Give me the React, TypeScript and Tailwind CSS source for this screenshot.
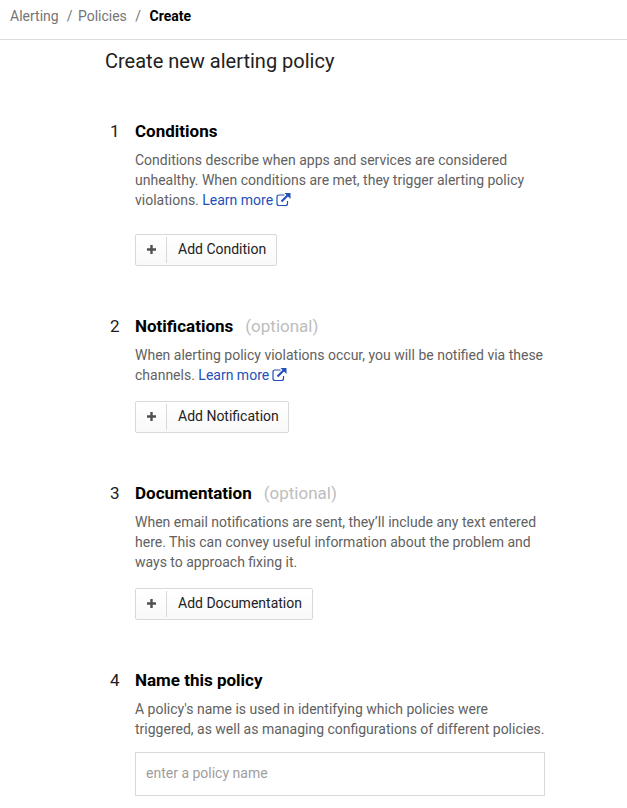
import React from "react";

function LinkIcon() {
  return (
    <svg className="ml-[3px] inline-block h-[14px] w-[15px] align-[-2px]" viewBox="0 0 15 14" fill="none" stroke="currentColor">
      <path d="M8.5 2H3Q1 2 1 4V10.5Q1 12.5 3 12.5H9.5Q11.5 12.5 11.5 10.5V8" strokeWidth="1.2" />
      <path d="M5.5 8.5L12 2" strokeWidth="2.2" />
      <path d="M8.5 0H14.5V6Z" fill="currentColor" stroke="none" />
    </svg>
  );
}

function Learn() {
  return (
    <a className="text-[#2450b8]">
      Learn more
      <LinkIcon />
    </a>
  );
}

function AddButton({ label, width }: { label: string; width: string }) {
  return (
    <button className={`flex h-8 items-center rounded-[2px] border border-[#d9d9d9] bg-linear-to-b from-white to-[#f9f9f9] ${width}`}>
      <span className="flex h-[26px] w-[31px] items-center justify-center border-r border-[#d9d9d9] pb-[2px]">
        <svg className="h-[9px] w-[9px]" viewBox="0 0 9 9" fill="none" stroke="#505050" strokeWidth="2.4">
          <path d="M0 4.5H9M4.5 0V9" />
        </svg>
      </span>
      <span className="ml-[11px] whitespace-nowrap pb-[2px] text-[14px] leading-[20px] text-[#212121]">{label}</span>
    </button>
  );
}

function Heading({ n, title, optional }: { n: number; title: string; optional?: boolean }) {
  return (
    <div className="flex h-6 items-center text-[17px] leading-6 text-black">
      <span className="w-[25px] text-[#212121]">{n}</span>
      <h2 className="font-bold">{title}</h2>
      {optional && <span className="ml-[12px] text-[#bdbdbd]">(optional)</span>}
    </div>
  );
}

export default function App() {
  return (
    <div className="h-[808px] w-[627px] overflow-hidden bg-white font-['Roboto',sans-serif] text-[14px] leading-5 text-[#616161]">
      <nav className="flex h-10 border-b border-[#dcdcdc] pl-[10px] pt-[6px] text-[#757575]">
        <span>Alerting</span>
        <span className="ml-[8px]">/</span>
        <span className="ml-[5.5px]">Policies</span>
        <span className="ml-[8.5px]">/</span>
        <span className="ml-[8.5px] font-bold text-black">Create</span>
      </nav>
      <main className="pl-[110px]">
        <h1 className="-ml-[5px] pt-[7px] text-[20px] leading-7 text-[#212121]">Create new alerting policy</h1>
        <section className="mt-[44px]">
          <Heading n={1} title="Conditions" />
          <div className="pl-[25px]">
            <p className="mt-[7px]">Conditions describe when apps and services are considered<br />unhealthy. When conditions are met, they trigger alerting policy<br />violations. <Learn /></p>
            <div className="mt-6"><AddButton label="Add Condition" width="w-[142px]" /></div>
          </div>
        </section>
        <section className="mt-[48px]">
          <Heading n={2} title="Notifications" optional />
          <div className="pl-[25px]">
            <p className="mt-[7px]">When alerting policy violations occur, you will be notified via these<br />channels. <Learn /></p>
            <div className="mt-4"><AddButton label="Add Notification" width="w-[154px]" /></div>
          </div>
        </section>
        <section className="mt-[48px]">
          <Heading n={3} title="Documentation" optional />
          <div className="pl-[25px]">
            <p className="mt-[7px]">When email notifications are sent, they’ll include any text entered<br />here. This can convey useful information about the problem and<br />ways to approach fixing it.</p>
            <div className="mt-4"><AddButton label="Add Documentation" width="w-[178px]" /></div>
          </div>
        </section>
        <section className="mt-[48px]">
          <Heading n={4} title="Name this policy" />
          <div className="pl-[25px]">
            <p className="mt-[7px]">A policy's name is used in identifying which policies were<br />triggered, as well as managing configurations of different policies.</p>
            <input className="mt-[13px] block h-11 w-[410px] border border-[#d9d9d9] px-[10px] pb-[2px] text-[14px] placeholder:text-[#9e9e9e]" placeholder="enter a policy name" />
          </div>
        </section>
      </main>
    </div>
  );
}
